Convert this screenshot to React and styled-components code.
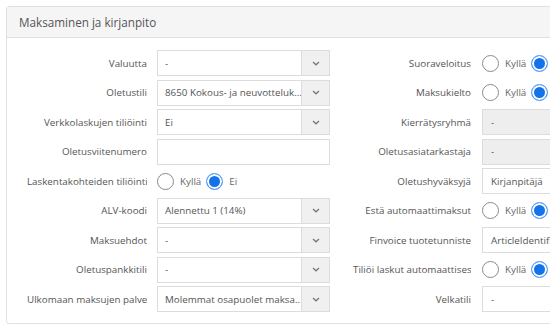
import React from 'react'
import styled, { createGlobalStyle } from 'styled-components'

const GlobalStyle = createGlobalStyle`
    html, body {
        margin: 0;
        padding: 0;
        background: #fff;
        overflow: hidden;
    }
    body {
        font-family: "Open Sans", "Liberation Sans", sans-serif;
        color: #555;
    }
`

const leftRows = [
    { label: 'Valuutta', type: 'select', value: '-' },
    { label: 'Oletustili', type: 'select', value: '8650 Kokous- ja neuvotteluk...' },
    { label: 'Verkkolaskujen tiliöinti', type: 'select', value: 'Ei' },
    { label: 'Oletusviitenumero', type: 'text', value: '' },
    { label: 'Laskentakohteiden tiliöinti', type: 'radio', checked: 'Ei' },
    { label: 'ALV-koodi', type: 'select', value: 'Alennettu 1 (14%)' },
    { label: 'Maksuehdot', type: 'select', value: '-' },
    { label: 'Oletuspankkitili', type: 'select', value: '-' },
    { label: 'Ulkomaan maksujen palvelumaksu', type: 'select', value: 'Molemmat osapuolet maksa...' },
]

const rightRows = [
    { label: 'Suoraveloitus', type: 'radio', checked: 'Ei' },
    { label: 'Maksukielto', type: 'radio', checked: 'Ei' },
    { label: 'Kierrätysryhmä', type: 'text', value: '-', disabled: true },
    { label: 'Oletusasiatarkastaja', type: 'text', value: '-', disabled: true },
    { label: 'Oletushyväksyjä', type: 'text', value: 'Kirjanpitäjä' },
    { label: 'Estä automaattimaksut', type: 'radio', checked: 'Ei' },
    { label: 'Finvoice tuotetunniste', type: 'text', value: 'ArticleIdentifier' },
    { label: 'Tiliöi laskut automaattisesti', type: 'radio', checked: 'Ei' },
    { label: 'Velkatili', type: 'text', value: '-' },
]

const Chevron = () => (
    <svg width="8" height="5" viewBox="0 0 8 5">
        <path d="M1 1 L4 3.8 L7 1" fill="none" stroke="#777" strokeWidth="1.3" />
    </svg>
)

const Field = ({ row }) => {
    if (row.type === 'select') {
        return (
            <SelectBox>
                <SelectValue>{row.value}</SelectValue>
                <SelectButton><Chevron /></SelectButton>
            </SelectBox>
        )
    }
    if (row.type === 'radio') {
        return (
            <RadioGroup>
                <Radio $checked={row.checked === 'Kyllä'} />
                <RadioText>Kyllä</RadioText>
                <Radio $checked={row.checked === 'Ei'} />
                <RadioText>Ei</RadioText>
            </RadioGroup>
        )
    }
    return <TextBox $disabled={row.disabled}>{row.value}</TextBox>
}

const Column = ({ rows, $right }) => (
    <Col $right={$right}>
        {rows.map((row) => (
            <Row key={row.label}>
                <Label $right={$right}>{row.label}</Label>
                <Control $right={$right}>
                    <Field row={row} />
                </Control>
            </Row>
        ))}
    </Col>
)

const App = () => {
    return (
        <Page>
            <GlobalStyle />
            <Panel>
                <PanelHeader>Maksaminen ja kirjanpito</PanelHeader>
                <PanelBody>
                    <Column rows={leftRows} />
                    <Column rows={rightRows} $right />
                </PanelBody>
            </Panel>
        </Page>
    )
}

const Page = styled.div`
    width: 550px;
    height: 330px;
    padding: 6px 0 0 6px;
    box-sizing: border-box;
    overflow: hidden;
`

const Panel = styled.div`
    width: 620px;
    height: 318px;
    box-sizing: border-box;
    border: 1px solid #e1e1e1;
    border-radius: 3px;
    background: #fff;
`

const PanelHeader = styled.div`
    height: 31px;
    box-sizing: border-box;
    padding: 0 12px;
    display: flex;
    align-items: center;
    background: #f5f5f5;
    border-bottom: 1px solid #e1e1e1;
    font-size: 11.7px;
    color: #555;
`

const PanelBody = styled.div`
    display: flex;
    padding: 12px 0 0 20px;
`

const Col = styled.div`
    display: flex;
    flex-direction: column;
    gap: 3.5px;
    margin-left: ${(p) => (p.$right ? '23px' : '0')};
`

const Row = styled.div`
    display: flex;
    align-items: center;
    height: 26px;
`

const Label = styled.div`
    width: ${(p) => (p.$right ? '118px' : '120px')};
    flex-shrink: 0;
    text-align: right;
    white-space: nowrap;
    overflow: hidden;
    font-size: 9.8px;
    color: #555;
    margin-right: ${(p) => (p.$right ? '11px' : '10px')};
`

const Control = styled.div`
    width: ${(p) => (p.$right ? '120px' : '173px')};
    height: 26px;
    display: flex;
    align-items: center;
`

const SelectBox = styled.div`
    display: flex;
    width: 100%;
    height: 26px;
    box-sizing: border-box;
    border: 1px solid #dcdcdc;
    background: #fff;
`

const SelectValue = styled.div`
    flex: 1;
    min-width: 0;
    display: flex;
    align-items: center;
    padding: 0 7px;
    font-size: 9.8px;
    color: #555;
    white-space: nowrap;
    overflow: hidden;
`

const SelectButton = styled.div`
    width: 27px;
    flex-shrink: 0;
    display: flex;
    align-items: center;
    justify-content: center;
    background: #f0f0f0;
    border-left: 1px solid #dcdcdc;
`

const TextBox = styled.div`
    width: 100%;
    height: 26px;
    box-sizing: border-box;
    border: 1px solid #dcdcdc;
    background: ${(p) => (p.$disabled ? '#eeeeee' : '#fff')};
    display: flex;
    align-items: center;
    padding: 0 8px;
    font-size: 9.8px;
    color: #555;
    white-space: nowrap;
    overflow: hidden;
`

const RadioGroup = styled.div`
    display: flex;
    align-items: center;
`

const Radio = styled.span`
    width: 17px;
    height: 17px;
    box-sizing: border-box;
    border-radius: 50%;
    border: 1px solid ${(p) => (p.$checked ? '#5ea2f0' : '#8a8a8a')};
    background: ${(p) => (p.$checked ? '#1273eb' : '#fff')};
    box-shadow: ${(p) => (p.$checked ? 'inset 0 0 0 2px #fff' : 'none')};
    flex-shrink: 0;
`

const RadioText = styled.span`
    font-size: 9.8px;
    color: #666;
    margin: 0 5px 0 6px;
`

export default App
